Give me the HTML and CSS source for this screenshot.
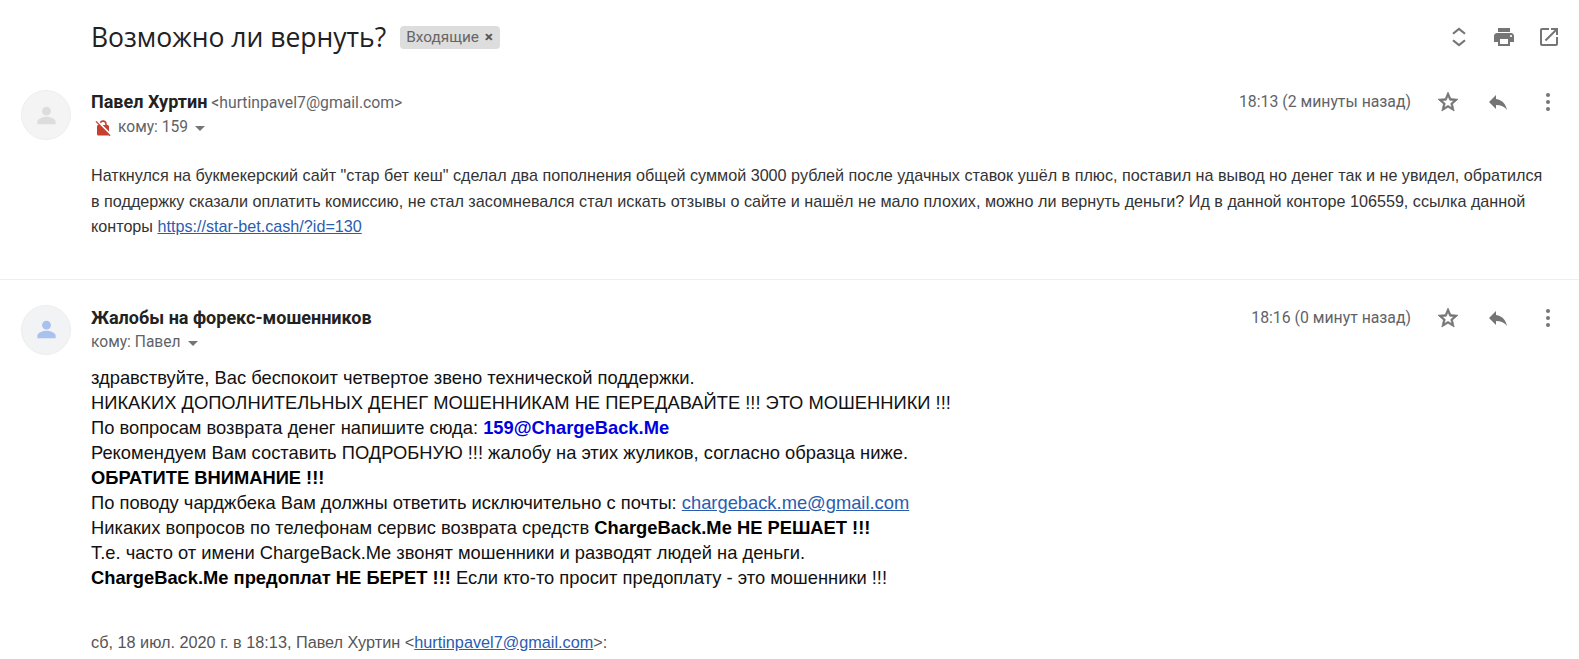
FILE: index.html
```html
<!DOCTYPE html>
<html lang="ru">
<head>
<meta charset="utf-8">
<title>Возможно ли вернуть?</title>
<link rel="stylesheet" href="styles.css">
</head>
<body>
<svg class="defs" width="0" height="0" aria-hidden="true">
  <symbol id="person" viewBox="0 0 24 24"><circle cx="12" cy="7.5" r="4.6"/><path d="M2.5 21v-2.6c0-3.6 6.4-5.2 9.5-5.2s9.5 1.6 9.5 5.2V21z"/></symbol>
  <symbol id="star" viewBox="0 0 24 24"><path d="M22 9.24l-7.19-.62L12 2 9.19 8.63 2 9.24l5.46 4.73L5.82 21 12 17.27 18.18 21l-1.63-7.03L22 9.24zM12 15.4l-3.76 2.27 1-4.28-3.32-2.88 4.38-.38L12 6.1l1.71 4.04 4.38.38-3.32 2.88 1 4.28L12 15.4z"/></symbol>
  <symbol id="reply" viewBox="0 0 24 24"><path d="M10 9V5l-7 7 7 7v-4.1c5 0 8.5 1.6 11 5.1-1-5-4-10-11-11z"/></symbol>
  <symbol id="more" viewBox="0 0 24 24"><circle cx="12" cy="5" r="2"/><circle cx="12" cy="12" r="2"/><circle cx="12" cy="19" r="2"/></symbol>
</svg>
<main class="thread">
  <header class="subject-row">
    <h1 class="subject">Возможно ли вернуть?</h1>
    <span class="label">Входящие <span class="label-x">×</span></span>
    <div class="top-actions">
      <svg class="icon" viewBox="0 0 24 24"><path d="M12 5.200L17.300 9.600 18.700 8.100 12 2.400 5.300 8.100 6.700 9.600zM12 18.800L6.700 14.400 5.300 15.900 12 21.600 18.700 15.900 17.300 14.400z"/></svg>
      <svg class="icon" viewBox="0 0 24 24"><path d="M19 8H5c-1.66 0-3 1.34-3 3v6h4v4h12v-4h4v-6c0-1.66-1.34-3-3-3zm-3 11H8v-5h8v5zm3-7c-.55 0-1-.45-1-1s.45-1 1-1 1 .45 1 1-.45 1-1 1zm-1-9H6v4h12V3z"/></svg>
      <svg class="icon" viewBox="0 0 24 24"><path d="M19 19H5V5h7V3H5c-1.11 0-2 .9-2 2v14c0 1.1.89 2 2 2h14c1.1 0 2-.9 2-2v-7h-2v7zM14 3v2h3.59l-9.83 9.83 1.41 1.41L19 6.41V10h2V3h-7z"/></svg>
    </div>
  </header>

  <article class="message message-first">
    <div class="avatar"><svg class="avatar-icon" viewBox="0 0 24 24"><use href="#person"/></svg></div>
    <div class="content">
      <div class="head">
        <div class="who">
          <div class="sender"><strong class="name">Павел Хуртин</strong> <span class="addr">&lt;hurtinpavel7@gmail.com&gt;</span></div>
          <div class="to">
            <svg class="nolock" viewBox="0 0 24 24"><path d="M18 8h-1V6.5A5 5 0 0 0 7.6 4.3l1.7 1.3A3 3 0 0 1 15 6.5V8h-3.5L20 16.5V10a2 2 0 0 0-2-2zM3.3 2.5 2 3.800l4.300 4.300A2 2 0 0 0 4 10v10a2 2 0 0 0 2 2h12c.5 0 1-.2 1.300-.5l1.400 1.400 1.300-1.300z"/></svg>
            <span>кому: 159</span><span class="caret"></span>
          </div>
        </div>
        <div class="meta">
          <span class="time">18:13 (2 минуты назад)</span>
          <svg class="icon star"><use href="#star"/></svg>
          <svg class="icon reply"><use href="#reply"/></svg>
          <svg class="icon more"><use href="#more"/></svg>
        </div>
      </div>
      <p class="text-first">Наткнулся на букмекерский сайт "стар бет кеш" сделал два пополнения общей суммой 3000 рублей после удачных ставок ушёл в плюс, поставил на вывод но денег так и не увидел, обратился<br>в поддержку сказали оплатить комиссию, не стал засомневался стал искать отзывы о сайте и нашёл не мало плохих, можно ли вернуть деньги? Ид в данной конторе 106559, ссылка данной<br>конторы <a href="#">https://star-bet.cash/?id=130</a></p>
    </div>
  </article>

  <hr class="divider">

  <article class="message">
    <div class="avatar avatar-blue"><svg class="avatar-icon" viewBox="0 0 24 24"><use href="#person"/></svg></div>
    <div class="content content-second">
      <div class="head">
        <div class="who">
          <div class="sender"><strong class="name">Жалобы на форекс-мошенников</strong></div>
          <div class="to"><span>кому: Павел</span><span class="caret"></span></div>
        </div>
        <div class="meta">
          <span class="time">18:16 (0 минут назад)</span>
          <svg class="icon star"><use href="#star"/></svg>
          <svg class="icon reply"><use href="#reply"/></svg>
          <svg class="icon more"><use href="#more"/></svg>
        </div>
      </div>
      <div class="text-second">
        <p>здравствуйте, Вас беспокоит четвертое звено технической поддержки.</p>
        <p>НИКАКИХ ДОПОЛНИТЕЛЬНЫХ ДЕНЕГ МОШЕННИКАМ НЕ ПЕРЕДАВАЙТЕ !!! ЭТО МОШЕННИКИ !!!</p>
        <p>По вопросам возврата денег напишите сюда: <b class="mail">159@ChargeBack.Me</b></p>
        <p>Рекомендуем Вам составить ПОДРОБНУЮ !!! жалобу на этих жуликов, согласно образца ниже.</p>
        <p><b>ОБРАТИТЕ ВНИМАНИЕ !!!</b></p>
        <p>По поводу чарджбека Вам должны ответить исключительно с почты: <a href="#">chargeback.me@gmail.com</a></p>
        <p>Никаких вопросов по телефонам сервис возврата средств <b>ChargeBack.Me НЕ РЕШАЕТ !!!</b></p>
        <p>Т.е. часто от имени ChargeBack.Me звонят мошенники и разводят людей на деньги.</p>
        <p><b>ChargeBack.Me предоплат НЕ БЕРЕТ !!!</b> Если кто-то просит предоплату - это мошенники !!!</p>
      </div>
      <p class="quote-head">сб, 18 июл. 2020 г. в 18:13, Павел Хуртин &lt;<a href="#">hurtinpavel7@gmail.com</a>&gt;:</p>
    </div>
  </article>
</main>
</body>
</html>
```
FILE: styles.css
```css
* { box-sizing: border-box; }
html, body { height: 100%; }
body {
  margin: 0;
  background: #fff;
  overflow: hidden;
  font-family: "Liberation Sans", Arial, sans-serif;
  color: #222;
}
.defs { position: absolute; }
.thread { width: 1579px; height: 659px; overflow: hidden; }

.subject-row {
  display: flex;
  align-items: center;
  height: 74px;
  padding: 0 18px 0 91px;
}
.subject {
  margin: 0;
  font: 400 26.500px/36px "Open Sans", sans-serif;
  color: #202124;
}
.label {
  margin-left: 14px;
  padding: 0 7px 0 6px;
  height: 23px;
  border-radius: 4px;
  background: #ddd;
  color: #666;
  font: 400 15.400px/23px Roboto, sans-serif;
  white-space: nowrap;
}
.label-x { font-weight: 700; color: #555; margin-left: 2px; }
.top-actions { margin-left: auto; display: flex; gap: 21px; }
.icon { width: 24px; height: 24px; fill: #757575; flex: none; }

.message { display: flex; padding-left: 21px; }
.message-first { margin-top: 16px; }
.message-first .to { margin-top: 1px; }
.avatar {
  flex: none;
  width: 50px;
  height: 50px;
  border-radius: 50%;
  background: #f4f4f4;
  border: 1px solid #eee;
  display: flex;
  align-items: center;
  justify-content: center;
  fill: #ddd;
}
.avatar-blue { background: #f1f3f4; fill: #a8c1ee; }
.avatar-icon { width: 23px; height: 23px; }
.content { flex: 1; min-width: 0; padding-left: 20px; padding-right: 19px; }
.content-second { padding-top: 1px; }
.head { display: flex; justify-content: space-between; }
.sender { height: 24px; font-size: 14px; line-height: 24px; white-space: nowrap; }
.name { font: 700 18px/24px Roboto, sans-serif; color: #222; }
.addr { font: 400 15.750px/24px Roboto, sans-serif; color: #5f6368; }
.to {
  display: flex;
  align-items: center;
  height: 25px;
  font: 400 15.600px/25px Roboto, sans-serif;
  color: #5f6368;
}
.nolock { width: 18px; height: 18px; margin: 0 6px 0 3px; fill: #c5402e; }
.caret {
  margin-left: 7px;
  margin-top: 2px;
  border-left: 5px solid transparent;
  border-right: 5px solid transparent;
  border-top: 5px solid #757575;
}
.meta { display: flex; align-items: center; height: 24px; }
.time { font: 400 15.800px/24px Roboto, sans-serif; color: #5f6368; margin-right: 25px; }
.star { margin-right: 26px; stroke: #757575; stroke-width: .7; }
.reply { margin-right: 26px; }
.more { margin-right: 0; }

.text-first {
  margin: 23px 0 0;
  font-size: 16.170px;
  line-height: 25.500px;
  color: #333;
  white-space: nowrap;
}
a { color: #2a5db0; }
.divider { border: 0; border-top: 1px solid #eee; margin: 39px 0 25px; }
.text-second { margin-top: 10.500px; font-size: 18.340px; line-height: 25px; color: #111; white-space: nowrap; }
.text-second p { margin: 0; }
.text-second b { color: #000; }
.text-second b.mail { color: #0000e0; }
.quote-head { margin: 39.500px 0 0; font-size: 16.250px; line-height: 25px; color: #555; white-space: nowrap; }
```
